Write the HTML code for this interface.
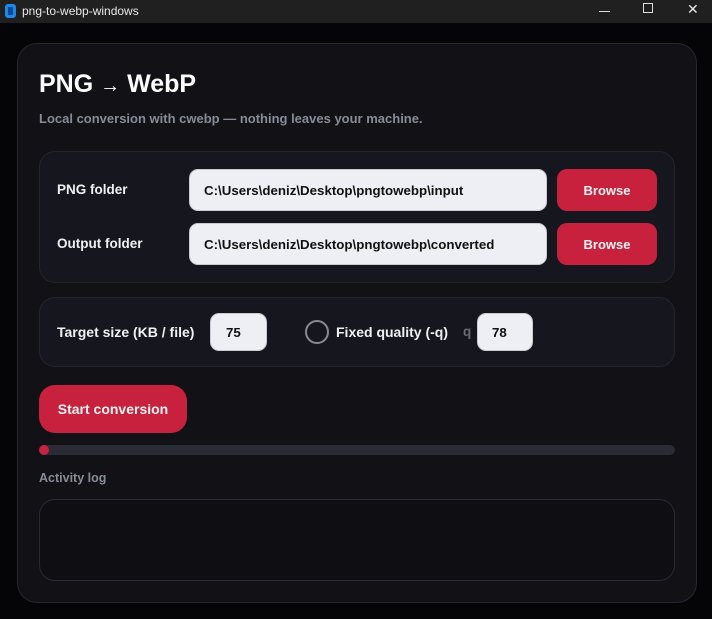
<!DOCTYPE html>
<html><head><meta charset="utf-8"><style>
*{box-sizing:border-box;margin:0;padding:0}
body{width:712px;height:619px;background:#050507;font-family:"Liberation Sans",sans-serif;position:relative;overflow:hidden;color:#fff}
.tb{position:absolute;left:0;top:0;width:712px;height:23px;background:#202020;color:#e8e8e8;font-size:12px}
.ab{position:absolute}
.card{position:absolute;left:17px;top:43px;width:680px;height:560px;background:#111116;border:1px solid #26262e;border-radius:20px}
.panel{position:absolute;background:#16161e;border:1px solid #24242c;border-radius:16px}
.lbl{position:absolute;font-size:13.5px;font-weight:bold;color:#f0f0f4}
.inp{position:absolute;background:#eeeff4;border:1px solid #c9cad2;border-radius:9px;color:#111;font-size:13.3px;font-weight:bold;padding-left:14px;display:flex;align-items:center}
.btn{position:absolute;background:#c8213d;border-radius:10px;color:#f3f3f3;font-size:13px;font-weight:bold;display:flex;align-items:center;justify-content:center}
</style></head><body>
<div class="tb">
<div class="ab" style="left:5px;top:4px;width:11px;height:14px;border:3px solid #1e88e5;border-radius:3px;background:#0d47a1"></div>
<div class="ab" style="left:22px;top:4px">png-to-webp-windows</div>
<div class="ab" style="left:599px;top:11px;width:11px;height:1px;background:#ddd"></div>
<div class="ab" style="left:643px;top:3px;width:10px;height:10px;border:1px solid #ddd"></div>
<div class="ab" style="left:687px;top:1px;font-size:14px">✕</div>
</div>
<div class="card"></div>
<div class="ab" style="left:39px;top:70px;font-size:25px;font-weight:bold;color:#fff">PNG <span style="font-size:20px">→</span> WebP</div>
<div class="ab" style="left:39px;top:111px;font-size:13px;font-weight:bold;color:#8a8b99">Local conversion with cwebp — nothing leaves your machine.</div>
<div class="panel" style="left:39px;top:151px;width:636px;height:132px"></div>
<div class="lbl" style="left:57px;top:182px">PNG folder</div>
<div class="inp" style="left:189px;top:169px;width:358px;height:42px">C:\Users\deniz\Desktop\pngtowebp\input</div>
<div class="btn" style="left:557px;top:169px;width:100px;height:42px">Browse</div>
<div class="lbl" style="left:57px;top:236px">Output folder</div>
<div class="inp" style="left:189px;top:223px;width:358px;height:42px">C:\Users\deniz\Desktop\pngtowebp\converted</div>
<div class="btn" style="left:557px;top:223px;width:100px;height:42px">Browse</div>
<div class="panel" style="left:39px;top:297px;width:636px;height:70px"></div>
<div class="lbl" style="left:57px;top:324px;font-size:14px">Target size (KB / file)</div>
<div class="inp" style="left:210px;top:313px;width:57px;height:38px;padding-left:15px">75</div>
<div class="ab" style="left:305px;top:320px;width:24px;height:24px;border:2px solid #8a8a92;border-radius:50%"></div>
<div class="lbl" style="left:336px;top:324px;font-size:14px">Fixed quality (-q)</div>
<div class="lbl" style="left:463px;top:324px;color:#6a6b78">q</div>
<div class="inp" style="left:477px;top:313px;width:56px;height:38px;padding-left:14px">78</div>
<div class="btn" style="left:39px;top:385px;width:148px;height:48px;border-radius:16px;font-size:14px">Start conversion</div>
<div class="ab" style="left:39px;top:445px;width:636px;height:10px;background:#2b2b36;border-radius:5px"></div>
<div class="ab" style="left:39px;top:445px;width:10px;height:10px;background:#c8213d;border-radius:5px"></div>
<div class="ab" style="left:39px;top:471px;font-size:12.5px;font-weight:bold;color:#8a8b99">Activity log</div>
<div class="ab" style="left:39px;top:499px;width:636px;height:82px;background:#0e0e13;border:1px solid #2a2a32;border-radius:16px"></div>
</body></html>
